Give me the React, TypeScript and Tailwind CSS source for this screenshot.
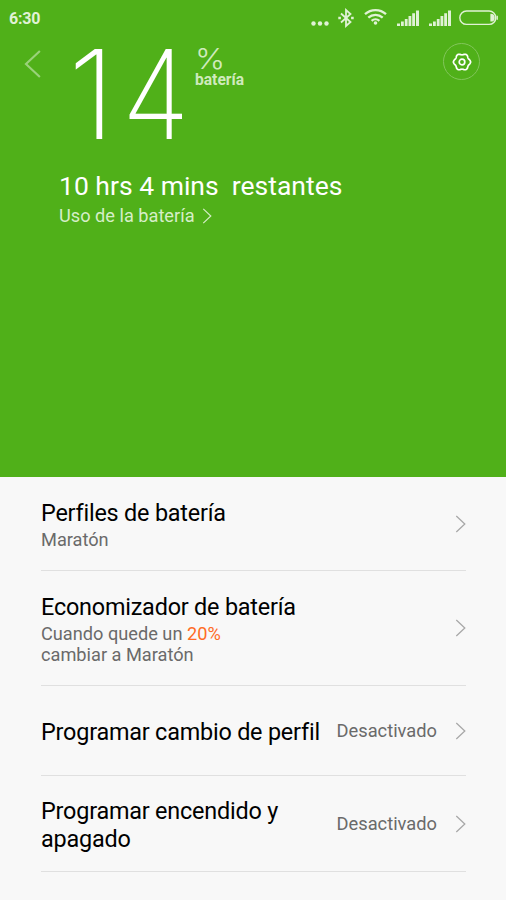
import type { ReactNode } from "react";

interface ChevronProps {
  className?: string;
}

const Chevron = ({ className }: ChevronProps) => (
  <svg viewBox="0 0 11 18" fill="none" stroke="currentColor" className={className}>
    <path d="M1.3 1l8.5 8-8.5 8" strokeWidth="1.3" />
  </svg>
);

const BluetoothIcon = () => (
  <svg width="16" height="20" viewBox="0 0 16 20" fill="none" stroke="currentColor" strokeWidth="1.8">
    <path d="M3 5.5l9.5 8.5L8 18V2l4.5 4L3 14.5" />
    <path d="M0.3 10h2.6M13.1 10h2.6" strokeWidth="2.4" />
  </svg>
);

const WifiIcon = () => (
  <svg width="23" height="17" viewBox="0 0 23 17" fill="none" stroke="currentColor" strokeWidth="2.3">
    <path d="M1 6.2a15.5 15.5 0 0 1 21 0" />
    <path d="M4.3 9.6a10.6 10.6 0 0 1 14.4 0" />
    <path d="M7.6 12.8a5.8 5.8 0 0 1 7.8 0" />
    <circle cx="11.5" cy="15" r="1.8" fill="currentColor" stroke="none" />
  </svg>
);

const SignalIcon = () => (
  <svg width="22" height="16" viewBox="0 0 22 16" fill="currentColor">
    <path d="M0 13.5h3V16H0zM4 11.5h2.8V16H4zM7.8 9h2.8v7H7.8zM11.5 6h2.8v10h-2.8zM15.2 3.2H18V16h-2.8zM19 0.5h3V16h-3z" />
  </svg>
);

const BatteryIcon = () => (
  <svg width="39" height="16" viewBox="0 0 39 16" fill="none" stroke="currentColor">
    <rect x="0.8" y="1" width="36" height="13.4" rx="6.7" strokeWidth="1.4" />
    <path d="M31.4 3.8h.4a3.9 3.9 0 0 1 0 7.8h-.4z" fill="currentColor" stroke="none" />
    <path d="M38.2 5.7v4" strokeWidth="1.4" />
  </svg>
);

// six rounded lobes around the centre
const gearPoints = Array.from({ length: 72 }, (_, i) => {
  const angle = (i * Math.PI) / 36;
  const radius = 7.9 + 0.7 * Math.cos(angle * 6);
  return `${(10 + radius * Math.cos(angle)).toFixed(2)},${(10 + radius * Math.sin(angle)).toFixed(2)}`;
}).join(" ");

const GearIcon = () => (
  <svg width="20" height="20" viewBox="0 0 20 20" fill="none" stroke="currentColor" strokeWidth="1.7" strokeLinejoin="round">
    <polygon points={gearPoints} />
    <circle cx="10" cy="10" r="2.8" />
  </svg>
);

interface RowProps {
  title: string;
  value?: string;
  className: string;
  children?: ReactNode;
}

const Row = ({ title, value, className, children }: RowProps) => (
  <div className={`flex items-center border-b border-[#e0e0e0] ${className}`}>
    <div className="flex-1 pt-[2px]">
      <h2 className="text-[23.4px] leading-[28px] tracking-[-0.2px] text-black">{title}</h2>
      {children && <p className="mt-[2px] text-[18.2px] leading-[21px] text-[#6a6a6a]">{children}</p>}
    </div>
    {value && <span className="text-[18.3px] leading-[21px] text-[#6a6a6a] mr-[18px]">{value}</span>}
    <Chevron className="w-[11px] h-[18px] text-[#a8a8a8]" />
  </div>
);

export default function App() {
  return (
    <div className="w-[506px] h-[900px] overflow-hidden bg-[#f8f8f8] font-['Roboto',sans-serif]">
      <header className="h-[477px] bg-[#50b019] text-white">
        <div className="flex h-9 items-center pl-[9px] pr-[8px] text-[#e0f2d5]">
          <span className="flex-1 pt-[1px] text-[16px] tracking-[-0.2px] font-bold">6:30</span>
          <svg width="18" height="5" viewBox="0 0 18 5" fill="currentColor" className="mt-[10px] mr-[9px]">
            <circle cx="2.5" cy="2.5" r="2.2" />
            <circle cx="9" cy="2.5" r="2.2" />
            <circle cx="15.5" cy="2.5" r="2.2" />
          </svg>
          <BluetoothIcon />
          <div className="ml-[10px] mr-[10px] mb-[3px]">
            <WifiIcon />
          </div>
          <SignalIcon />
          <div className="ml-[10px] mr-[8px]">
            <SignalIcon />
          </div>
          <BatteryIcon />
        </div>
        <div className="flex h-[134px] items-start">
          <Chevron className="w-[18px] h-[30px] ml-[24px] mt-[13px] rotate-180 text-[#9ad27a]" />
          <div className="flex ml-[26px] mt-[-5px] font-['Inter',sans-serif] text-[124px] leading-[126px] font-extralight">
            <span className="w-[54px]">1</span>
            <span className="w-[73px] origin-left scale-x-[0.89]">4</span>
          </div>
          <div className="flex-1 text-[#cfeabd]">
            <p className="font-['Inter',sans-serif] text-[28px] leading-[24px] h-[36px] pt-[11px] font-light origin-left scale-x-[1.15]">%</p>
            <p className="text-[15.6px] leading-[16px] font-bold">batería</p>
          </div>
          <div className="flex w-[37px] h-[37px] mt-[7px] mr-[26px] items-center justify-center rounded-full border border-[#82c65b]">
            <GearIcon />
          </div>
        </div>
        <div className="pl-[59px]">
          <p className="whitespace-pre text-[26.5px] leading-[32px]">10 hrs 4 mins  restantes</p>
          <p className="flex items-center mt-[3px] text-[18.2px] leading-[22px] text-[#d6eec8]">
            Uso de la batería
            <Chevron className="ml-[7px] w-[10px] h-[16px]" />
          </p>
        </div>
      </header>
      <main className="pl-[41px] pr-[40px]">
        <Row title="Perfiles de batería" className="h-[94px]">
          Maratón
        </Row>
        <Row title="Economizador de batería" className="h-[115px]">
          Cuando quede un <span className="text-[#ff6c26]">20%</span>
          <br />
          cambiar a Maratón
        </Row>
        <Row title="Programar cambio de perfil" value="Desactivado" className="h-[90px]" />
        <Row title="Programar encendido y apagado" value="Desactivado" className="h-[96px]" />
      </main>
    </div>
  );
}
